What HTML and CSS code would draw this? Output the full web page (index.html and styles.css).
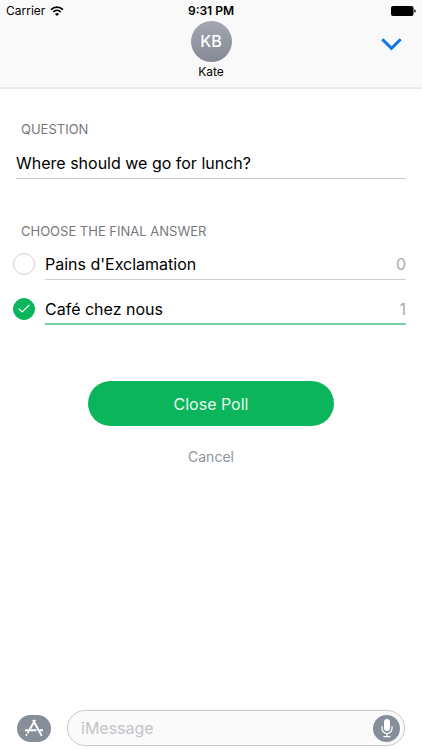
FILE: index.html
```html
<!DOCTYPE html>
<html lang="en">
<head>
<meta charset="utf-8">
<meta name="viewport" content="width=device-width, initial-scale=1">
<title>Close Poll</title>
<link rel="stylesheet" href="styles.css">
</head>
<body>
<header class="header">
  <div class="status">
    <div class="carrier">
      <span>Carrier</span>
      <svg width="14" height="10" viewBox="0 0 14 10" fill="none" stroke="#000" stroke-width="1.7" aria-hidden="true">
        <path d="M1 3.7C4.5.3 9.5.3 13 3.7"/>
        <path d="M3.200 6C5.400 3.900 8.600 3.900 10.800 6"/>
        <path d="M7 10 5 7.900Q7 6.300 9 7.900Z" fill="#000" stroke="none"/>
      </svg>
    </div>
    <time class="time">9:31 PM</time>
    <svg class="battery" width="25" height="10" viewBox="0 0 25 10" aria-hidden="true">
      <rect width="22.500" height="10" rx="2"/>
      <path d="M23.300 3.200q1.500.5 1.500 1.800t-1.500 1.800z"/>
    </svg>
  </div>
  <div class="contact">
    <div class="person">
      <div class="avatar">KB</div>
      <div class="name">Kate</div>
    </div>
    <button class="collapse" type="button" aria-label="Collapse">
      <svg width="21" height="13" viewBox="0 0 21 13" fill="none" stroke="#0b78ea" stroke-width="3" aria-hidden="true"><path d="M1.300 1.300 10.500 10.300 19.700 1.300"/></svg>
    </button>
  </div>
</header>

<main>
  <form class="poll">
    <label class="caption" for="question">QUESTION</label>
    <input class="question" id="question" type="text" value="Where should we go for lunch?">
    <fieldset class="answers">
      <legend class="caption">CHOOSE THE FINAL ANSWER</legend>
      <label class="answer">
        <input class="radio" type="radio" name="answer">
        <span class="mark"></span>
        <span class="row"><span>Pains d'Exclamation</span><span class="count">0</span></span>
      </label>
      <label class="answer">
        <input class="radio" type="radio" name="answer" checked>
        <span class="mark"><svg width="12" height="9" viewBox="0 0 12 9" fill="none" stroke="#fff" stroke-width="1.200" aria-hidden="true"><path d="M.6 4.600 4.200 8 11.400.8"/></svg></span>
        <span class="row"><span>Café chez nous</span><span class="count">1</span></span>
      </label>
    </fieldset>
    <button class="close" type="button">Close Poll</button>
    <button class="cancel" type="button">Cancel</button>
  </form>
</main>

<footer class="composer">
  <button class="apps" type="button" aria-label="Apps">
    <svg width="20" height="18" viewBox="0 0 20 18" fill="none" stroke="#fff" stroke-width="1.900" aria-hidden="true">
      <path d="M11.200 1 3.500 14.200M2.800 15.300 2 16.700M9 1l8.700 15.700"/>
      <path d="M1 11.300h11.500M15.500 11.300H19"/>
    </svg>
  </button>
  <div class="message">
    <input class="text" type="text" placeholder="iMessage" aria-label="iMessage">
    <button class="mic" type="button" aria-label="Dictate">
      <svg width="12" height="20" viewBox="0 0 12 20" fill="none" stroke="#fff" stroke-width="1.200" aria-hidden="true">
        <rect x="3" y="1" width="6" height="12" rx="3" fill="#fff" stroke="none"/>
        <path d="M1 8v2.500a5 5 0 0 0 10 0V8M6 15.500v3M2.500 18.700h7"/>
      </svg>
    </button>
  </div>
</footer>
</body>
</html>
```
FILE: styles.css
```css
* {
  box-sizing: border-box;
}

body {
  margin: 0;
  min-height: 100vh;
  display: flex;
  flex-direction: column;
  background: #fff;
  color: #000;
  font-family: Inter, "Liberation Sans", sans-serif;
}

button,
input {
  margin: 0;
  padding: 0;
  border: 0;
  background: none;
  color: inherit;
  font: inherit;
}

svg {
  display: block;
}

.header {
  background: #f9f9f9;
  border-bottom: 2px solid #ebebeb;
}

.status {
  display: grid;
  grid-template-columns: 1fr auto 1fr;
  align-items: center;
  height: 21px;
  padding: 0 6px;
  font-size: 12px;
  line-height: 21px;
}

.carrier {
  display: flex;
  align-items: center;
  gap: 5px;
}

.time {
  font-weight: 600;
}

.battery {
  justify-self: end;
}

.contact {
  display: grid;
  grid-template-columns: 1fr auto 1fr;
  height: 66px;
  padding: 0 20px;
}

.person {
  grid-column: 2;
  text-align: center;
}

.avatar {
  width: 41px;
  height: 41px;
  border-radius: 50%;
  background: linear-gradient(#a3a7b3, #858993);
  color: #fff;
  font-size: 16px;
  font-weight: 500;
  line-height: 41px;
}

.name {
  font-size: 12px;
  line-height: 20px;
}

.collapse {
  justify-self: end;
  align-self: start;
  padding-top: 17px;
}

main {
  flex: 1;
  padding: 31px 16px;
}

.poll {
  display: flex;
  flex-direction: column;
}

.caption {
  padding: 0 5px;
  color: #77777c;
  font-size: 13px;
  line-height: 18px;
}

.question {
  width: 100%;
  height: 32px;
  margin-top: 9px;
  border-bottom: 1px solid #c8c8cc;
  font-size: 16px;
}

.answers {
  min-width: 0;
  margin: 43px 0 0;
  padding: 0;
  border: 0;
}

.answer {
  display: flex;
  align-items: center;
  gap: 10px;
  height: 45px;
  margin-left: -3px;
}

.answer:first-of-type {
  margin-top: 1px;
}

.radio {
  position: absolute;
  opacity: 0;
}

.mark {
  display: grid;
  place-items: center;
  width: 22px;
  height: 22px;
  border: 1px solid #d0d0d4;
  border-radius: 50%;
}

.row {
  flex: 1;
  display: flex;
  justify-content: space-between;
  height: 33px;
  border-bottom: 1px solid #d0d0d4;
  font-size: 16px;
  line-height: 34px;
}

.count {
  color: #a9a9ae;
}

.radio:checked + .mark {
  border-color: #0bb55b;
  background: #0bb55b;
}

.radio:checked ~ .row {
  border-bottom: 2px solid #76d1a0;
}

.close {
  align-self: center;
  width: 63%;
  height: 45px;
  margin-top: 50px;
  border-radius: 23px;
  background: #0bb55b;
  color: #e8f9ef;
  font-size: 16px;
}

.cancel {
  align-self: center;
  margin-top: 20px;
  color: #8e939e;
  font-size: 14px;
  line-height: 22px;
}

.composer {
  display: flex;
  align-items: center;
  gap: 16px;
  padding: 0 17px 4px;
}

.apps {
  display: grid;
  place-items: center;
  width: 34px;
  height: 27px;
  border-radius: 14px;
  background: #858e99;
}

.message {
  flex: 1;
  display: flex;
  align-items: center;
  height: 36px;
  padding: 0 4px 0 13px;
  border: 1px solid #c8c8cd;
  border-radius: 18px;
  background: #fafafa;
}

.text {
  flex: 1;
  min-width: 0;
  font-size: 16px;
}

.text::placeholder {
  color: #c3c3c9;
  opacity: 1;
}

.mic {
  display: grid;
  place-items: center;
  width: 27px;
  height: 27px;
  border-radius: 50%;
  background: #858e99;
}
```
